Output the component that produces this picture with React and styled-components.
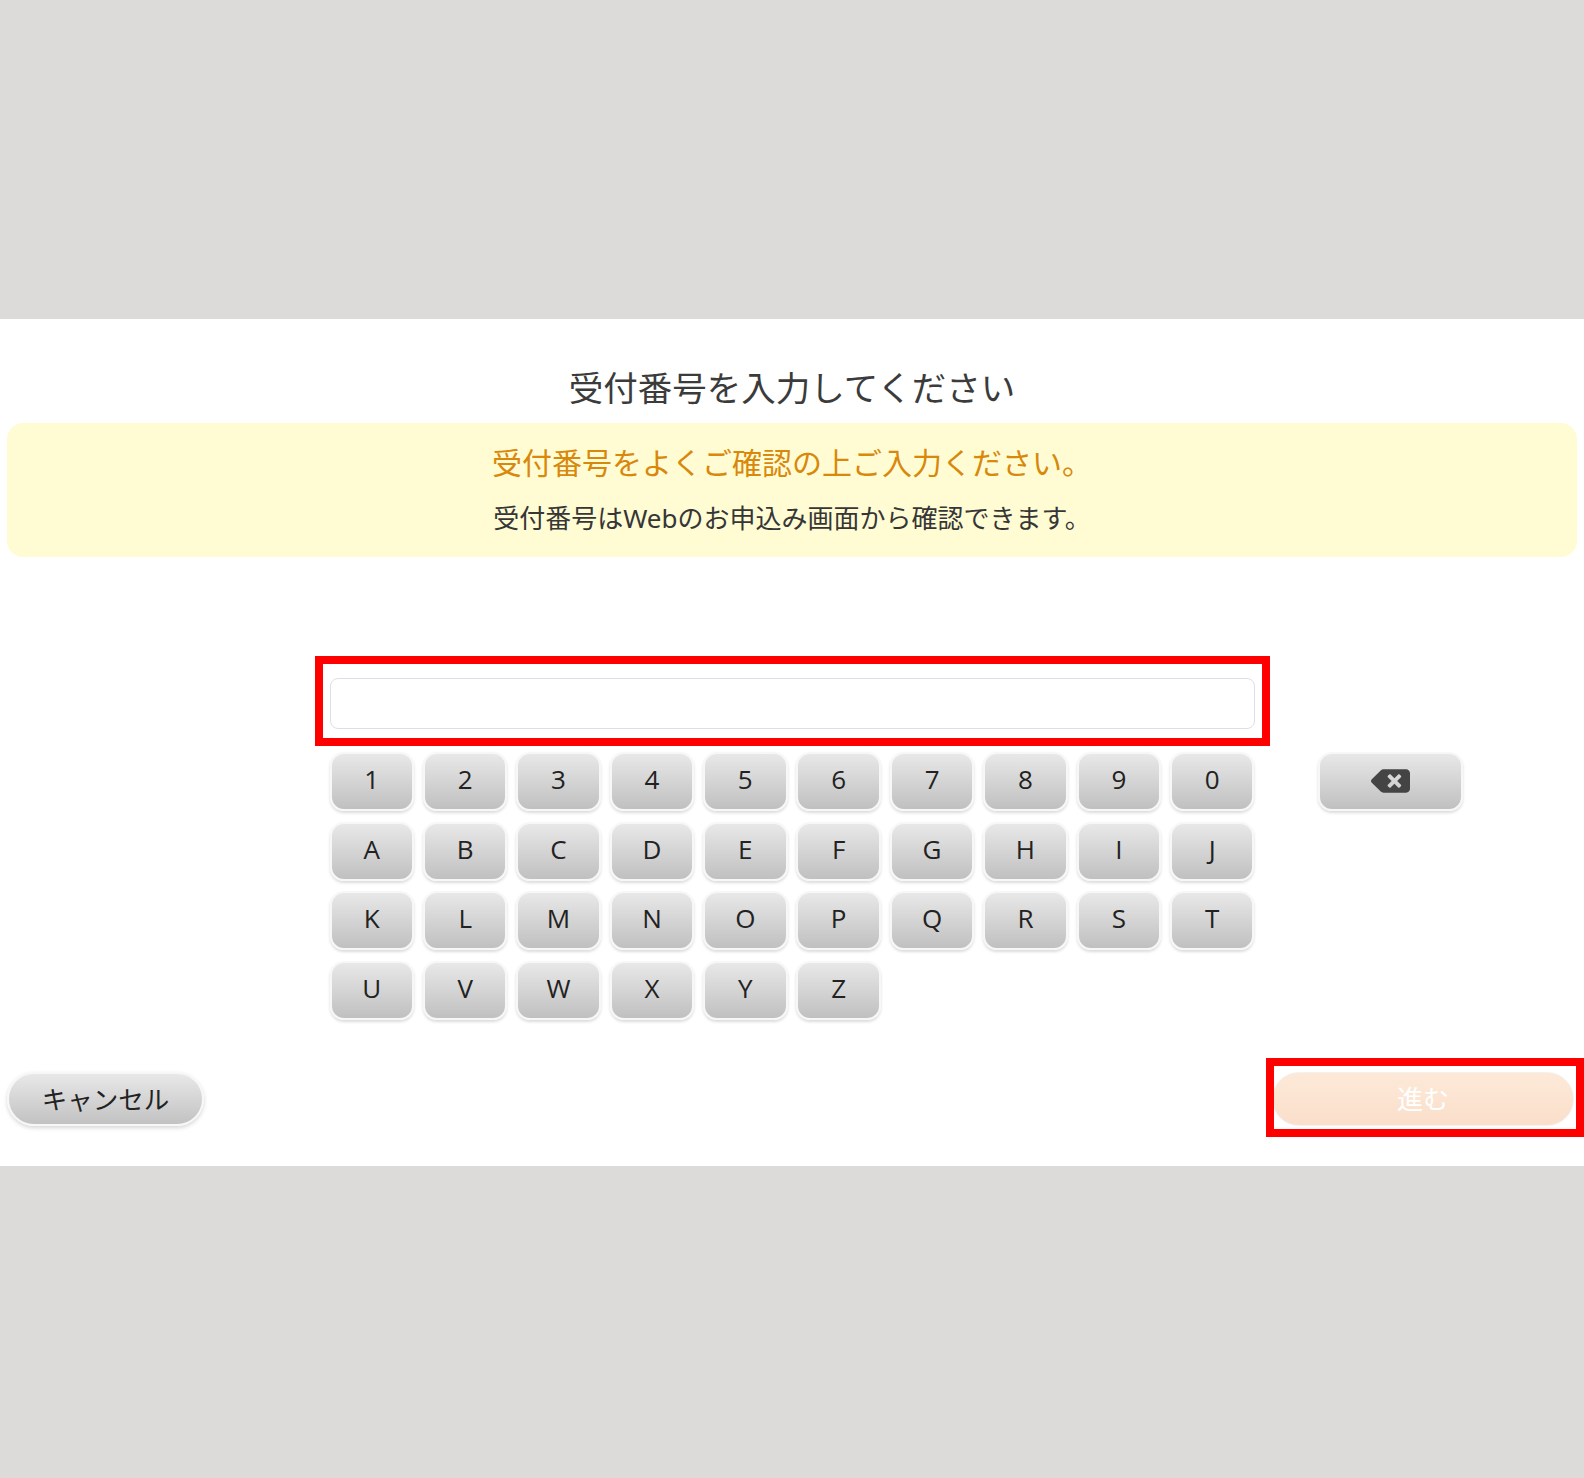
import React, { useState } from 'react'
import styled, { createGlobalStyle } from 'styled-components'

const GlobalStyle = createGlobalStyle`
  html, body {
    margin: 0;
    padding: 0;
    background: #dcdbd9;
  }
  body {
    font-family: "Noto Sans", "Noto Sans CJK JP", sans-serif;
    color: #333;
  }
`

const Page = styled.div`
  min-height: 100vh;
  padding-top: 319px;
  box-sizing: border-box;
`

const Panel = styled.main`
  background: #fff;
  height: 847px;
  box-sizing: border-box;
  padding-top: 43px;
  display: flex;
  flex-direction: column;
`

const Title = styled.h1`
  margin: 0 0 13px;
  font-size: 34.5px;
  line-height: 48px;
  font-weight: 400;
  color: #3b3b3b;
  text-align: center;
  font-family: "Noto Sans CJK JP", sans-serif;
`

const Notice = styled.section`
  margin: 0 7px;
  background: #fffcd4;
  border-radius: 16px;
  height: 134px;
  box-sizing: border-box;
  padding-top: 18px;
  text-align: center;
  font-family: "Noto Sans", "Noto Sans CJK JP", sans-serif;
`

const NoticeLead = styled.p`
  margin: 0 0 15px;
  color: #d8880a;
  font-size: 30px;
  line-height: 44px;
`

const NoticeSub = styled.p`
  margin: 0;
  color: #363636;
  font-size: 26px;
  line-height: 36px;
`

const Entry = styled.div`
  margin-top: 121px;
  display: grid;
  grid-template-columns: 1fr 925px 1fr;
  align-items: start;
`

const Center = styled.div`
  grid-column: 2;
  display: flex;
  flex-direction: column;
  gap: 23px;
`

const InputField = styled.div`
  position: relative;
`

const TextBox = styled.input`
  display: block;
  width: 100%;
  height: 51px;
  box-sizing: border-box;
  border: 1px solid #dcdfe6;
  border-radius: 8px;
  background: #fff;
  font-size: 26px;
  padding: 0 14px;
  outline: none;
`

const Highlight = styled.div`
  position: absolute;
  top: ${p => p.$t}px;
  left: ${p => p.$l}px;
  right: ${p => p.$r}px;
  bottom: ${p => p.$b}px;
  border: 8px solid #ff0000;
  pointer-events: none;
`

const Keys = styled.div`
  display: grid;
  grid-template-columns: repeat(10, 1fr);
  column-gap: 8.8px;
  row-gap: 10.5px;
`

const Key = styled.button`
  height: 59px;
  box-sizing: border-box;
  border: 2px solid #f7f7f7;
  border-radius: 14px;
  background: linear-gradient(#e8e8e8, #c0c0c0);
  box-shadow: 0 2px 3px rgba(0, 0, 0, 0.14);
  font-family: "Open Sans", "Noto Sans", sans-serif;
  font-size: 26px;
  color: #222;
  padding: 0 0 5px;
  display: flex;
  align-items: center;
  justify-content: center;
  cursor: pointer;
`

const Side = styled.div`
  grid-column: 3;
  padding-left: 63.5px;
  padding-top: 74px;
`

const BackKey = styled(Key)`
  width: 145px;
  color: #444;
  padding: 0 0 2px;
`

const Footer = styled.div`
  margin-top: auto;
  padding: 0 10px 40px 7px;
  display: flex;
  justify-content: space-between;
  align-items: center;
`

const Pill = styled.button`
  height: 54px;
  width: ${p => p.$w}px;
  box-sizing: border-box;
  border-radius: 27px;
  font-family: "Noto Sans CJK JP", sans-serif;
  font-size: 25.5px;
  padding: 0 0 4px;
  cursor: pointer;
`

const CancelButton = styled(Pill)`
  border: 2px solid #f7f7f7;
  background: linear-gradient(#e8e8e8, #c2c2c2);
  color: #222;
  box-shadow: 0 2px 4px rgba(0, 0, 0, 0.16);
`

const NextButton = styled(Pill)`
  border: 1px solid #f6f1ec;
  background: linear-gradient(#fde9d8, #fadfcb);
  color: #fff;
  font-size: 26px;
`

const NextWrap = styled.div`
  position: relative;
`

const BackspaceIcon = () => (
  <svg width="39" height="24" viewBox="0 64 640 384" fill="currentColor">
    <path d="M576 64H205.26A63.97 63.97 0 0 0 160 82.75L9.37 233.37c-12.5 12.5-12.5 32.76 0 45.25L160 429.25c12 12 28.28 18.75 45.25 18.75H576c35.35 0 64-28.650 64-64V128c0-35.35-28.65-64-64-64zm-84.69 254.06c6.25 6.25 6.25 16.38 0 22.63l-22.62 22.62c-6.25 6.25-16.38 6.25-22.63 0L384 301.25l-62.06 62.06c-6.25 6.25-16.38 6.25-22.63 0l-22.62-22.62c-6.25-6.25-6.25-16.38 0-22.63L338.75 256l-62.06-62.06c-6.25-6.25-6.25-16.38 0-22.63l22.62-22.62c6.25-6.25 16.38-6.25 22.63 0L384 210.75l62.06-62.06c6.25-6.25 16.38-6.25 22.63 0l22.62 22.62c6.25 6.25 6.25 16.38 0 22.63L429.25 256l62.06 62.06z" />
  </svg>
)

const rows = ['1234567890', 'ABCDEFGHIJ', 'KLMNOPQRST', 'UVWXYZ']

export default function App() {
  const [value, setValue] = useState('')

  return (
    <Page>
      <GlobalStyle />
      <Panel>
        <Title>受付番号を入力してください</Title>
        <Notice>
          <NoticeLead>受付番号をよくご確認の上ご入力ください。</NoticeLead>
          <NoticeSub>受付番号はWebのお申込み画面から確認できます。</NoticeSub>
        </Notice>

        <Entry>
          <Center>
            <InputField>
              <TextBox value={value} readOnly />
              <Highlight $t={-22} $l={-15} $r={-15} $b={-17} />
            </InputField>
            <Keys>
              {rows.join('').split('').map(ch => (
                <Key key={ch} onClick={() => setValue(v => v + ch)}>{ch}</Key>
              ))}
            </Keys>
          </Center>
          <Side>
            <BackKey onClick={() => setValue(v => v.slice(0, -1))}>
              <BackspaceIcon />
            </BackKey>
          </Side>
        </Entry>

        <Footer>
          <CancelButton $w={197}>キャンセル</CancelButton>
          <NextWrap>
            <NextButton $w={302} disabled={!value}>進む</NextButton>
            <Highlight $t={-14} $l={-6} $r={-10} $b={-11} />
          </NextWrap>
        </Footer>
      </Panel>
    </Page>
  )
}
